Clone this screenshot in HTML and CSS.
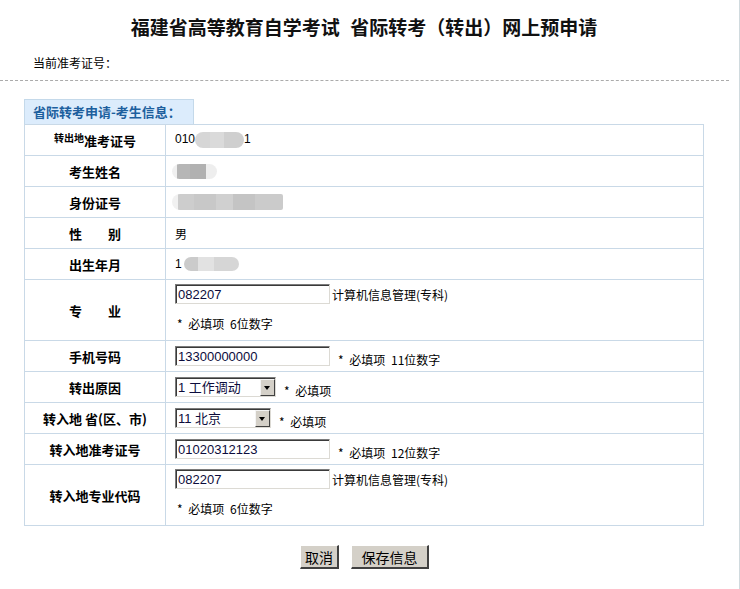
FILE: index.html
```html
<!DOCTYPE html>
<html lang="zh-CN">
<head>
<meta charset="utf-8">
<title>省际转考（转出）网上预申请</title>
<link rel="stylesheet" href="styles.css">
</head>
<body>
<div class="page">
  <div class="inner">
    <h1 class="title">福建省高等教育自学考试 省际转考（转出）网上预申请</h1>
    <div class="current">当前准考证号：</div>
    <div class="divider"></div>
    <div class="panel">
      <div class="tab">省际转考申请-考生信息：</div>
      <table class="form">
        <tr>
          <th class="label"><span class="sup">转出地</span>准考证号</th>
          <td class="value">010<span class="blob blob-no"></span>1</td>
        </tr>
        <tr>
          <th class="label">考生姓名</th>
          <td class="value"><span class="blob blob-name"></span></td>
        </tr>
        <tr>
          <th class="label">身份证号</th>
          <td class="value"><span class="blob blob-id"></span></td>
        </tr>
        <tr>
          <th class="label">性　　别</th>
          <td class="value">男</td>
        </tr>
        <tr>
          <th class="label">出生年月</th>
          <td class="value">1<span class="blob blob-birth"></span></td>
        </tr>
        <tr>
          <th class="label tall">专　　业</th>
          <td class="value tall">
            <div class="line"><input class="field" type="text" value="082207"><span class="after">计算机信息管理(专科)</span></div>
            <div class="note">* 必填项 6位数字</div>
          </td>
        </tr>
        <tr>
          <th class="label">手机号码</th>
          <td class="value"><div class="line"><input class="field" type="text" value="13300000000"><span class="hint">* 必填项 11位数字</span></div></td>
        </tr>
        <tr>
          <th class="label">转出原因</th>
          <td class="value"><div class="line"><span class="select sel-reason"><select><option>1 工作调动</option></select><span class="arrow"></span></span><span class="hint">* 必填项</span></div></td>
        </tr>
        <tr>
          <th class="label">转入地 省(区、市)</th>
          <td class="value"><div class="line"><span class="select sel-prov"><select><option>11 北京</option></select><span class="arrow"></span></span><span class="hint">* 必填项</span></div></td>
        </tr>
        <tr>
          <th class="label">转入地准考证号</th>
          <td class="value"><div class="line"><input class="field" type="text" value="01020312123"><span class="hint">* 必填项 12位数字</span></div></td>
        </tr>
        <tr>
          <th class="label tall">转入地专业代码</th>
          <td class="value tall">
            <div class="line"><input class="field" type="text" value="082207"><span class="after">计算机信息管理(专科)</span></div>
            <div class="note">* 必填项 6位数字</div>
          </td>
        </tr>
      </table>
      <div class="actions">
        <button class="btn btn-cancel" type="button">取消</button>
        <button class="btn btn-save" type="button">保存信息</button>
      </div>
    </div>
  </div>
</div>
</body>
</html>
```
FILE: styles.css
```css
html, body {
  margin: 0;
  padding: 0;
  background: #ffffff;
}

body {
  font-family: "Liberation Sans", "Noto Sans CJK SC", sans-serif;
  font-size: 12px;
  color: #000000;
}

.page {
  width: 740px;
  min-height: 589px;
  border-right: 1px solid #d0dade;
  box-sizing: border-box;
}

.inner {
  width: 728px;
}

.title {
  margin: 0;
  padding-top: 14px;
  text-align: center;
  font-family: "Noto Sans CJK SC", sans-serif;
  font-size: 19px;
  line-height: 26px;
  font-weight: bold;
  word-spacing: 6px;
  color: #111111;
}

.current {
  margin-top: 13px;
  padding-left: 33px;
  line-height: 20px;
  font-family: "Noto Sans CJK SC", sans-serif;
  font-size: 12px;
}

.divider {
  margin-top: 7px;
  width: 729px;
  border-top: 1px dashed #ababab;
}

.panel {
  width: 680px;
  margin: 18px auto 0;
}

.tab {
  width: 170px;
  height: 25px;
  box-sizing: border-box;
  border: 1px solid #c4d9ea;
  border-bottom: 0;
  background: #dcecfc;
  color: #1d5f9e;
  font-family: "Noto Sans CJK SC", sans-serif;
  font-weight: bold;
  font-size: 13px;
  line-height: 24px;
  padding-left: 8px;
}

.form {
  width: 680px;
  border-collapse: collapse;
}

.form th,
.form td {
  border: 1px solid #c9d9e7;
  height: 30px;
  padding: 0;
}

.label {
  width: 140px;
  text-align: center;
  font-family: "Noto Sans CJK SC", sans-serif;
  font-size: 13px;
  font-weight: bold;
  white-space: nowrap;
}

.sup {
  font-size: 10px;
  vertical-align: 4px;
}

.value {
  text-align: left;
  padding: 0 9px !important;
  font-family: "Liberation Sans", "Noto Sans CJK SC", sans-serif;
  font-size: 12px;
}

.value.tall {
  height: 51px;
  padding: 4px 9px 5px !important;
  vertical-align: top;
}

.blob {
  display: inline-block;
  vertical-align: middle;
  border-radius: 8px;
  filter: blur(0.6px);
}

.blob-no {
  width: 49px;
  height: 16px;
  background: linear-gradient(90deg, #d6d6d6 0 30%, #dadada 30% 60%, #cfcfcf 60% 100%);
}

.blob-name {
  width: 45px;
  height: 15px;
  margin-left: -3px;
  background: linear-gradient(90deg, #f0f0f0 0 12%, #b6b6b6 12% 40%, #b1b1b1 40% 75%, #eeeeee 75% 100%);
}

.blob-id {
  width: 111px;
  height: 16px;
  margin-left: -3px;
  background: linear-gradient(90deg, #f1f1f1 0 5%, #cdcdcd 5% 20%, #c8c8c8 20% 40%, #d0d0d0 40% 55%, #c4c4c4 55% 75%, #cbcbcb 75% 100%);
  border-radius: 8px 2px 2px 8px;
}

.blob-birth {
  width: 55px;
  height: 14px;
  margin-left: 2px;
  background: linear-gradient(90deg, #cbcbcb 0 25%, #e2e2e2 25% 55%, #d6d6d6 55% 100%);
}

.line {
  display: flex;
  align-items: flex-end;
}

.field {
  width: 155px;
  height: 20px;
  box-sizing: border-box;
  margin: 0;
  padding: 0 2px;
  border-style: solid;
  border-width: 1px;
  border-color: #7b7b7b #dcdad4 #dcdad4 #7b7b7b;
  box-shadow: inset 1px 1px 0 #3a3a3a;
  font-family: "Liberation Sans", "Noto Sans CJK SC", sans-serif;
  font-size: 13px;
  color: #0c0c3c;
  background: #ffffff;
  outline: none;
}

.after {
  margin-left: 2px;
  line-height: 14px;
  padding-bottom: 2px;
  font-family: "Noto Sans CJK SC", sans-serif;
  font-size: 12px;
}

.hint {
  margin-left: 8px;
  line-height: 14px;
  margin-bottom: -1px;
  word-spacing: 3px;
  font-family: "Noto Sans CJK SC", sans-serif;
  font-size: 12px;
}

.note {
  margin-top: 10px;
  padding-left: 2px;
  line-height: 20px;
  word-spacing: 3px;
  font-family: "Noto Sans CJK SC", sans-serif;
  font-size: 12px;
}

.select {
  position: relative;
  display: inline-block;
  height: 20px;
}

.select select {
  -webkit-appearance: none;
  appearance: none;
  height: 20px;
  box-sizing: border-box;
  margin: 0;
  padding: 0 0 0 2px;
  border-style: solid;
  border-width: 1px;
  border-color: #7b7b7b #dcdad4 #dcdad4 #7b7b7b;
  box-shadow: inset 1px 1px 0 #3a3a3a;
  background: #ffffff;
  font-family: "Liberation Sans", "Noto Sans CJK SC", sans-serif;
  font-size: 13px;
  color: #0c0c3c;
  border-radius: 0;
  outline: none;
}

.sel-reason select {
  width: 101px;
}

.sel-prov select {
  width: 96px;
}

.arrow {
  position: absolute;
  right: 1px;
  top: 2px;
  width: 15px;
  height: 17px;
  box-sizing: border-box;
  background: #d4d0c8;
  border-style: solid;
  border-width: 1px;
  border-color: #f4f4f4 #404040 #404040 #f4f4f4;
  pointer-events: none;
}

.arrow::after {
  content: "";
  position: absolute;
  left: 3px;
  top: 6px;
  border-left: 3.5px solid transparent;
  border-right: 3.5px solid transparent;
  border-top: 4px solid #000000;
}

.actions {
  display: flex;
  justify-content: center;
  gap: 12px;
  margin-top: 19px;
  padding-left: 1px;
}

.btn {
  height: 24px;
  box-sizing: border-box;
  padding: 0;
  margin: 0;
  background: #d4d0c8;
  border-style: solid;
  border-width: 1px 2px 2px 1px;
  border-color: #ffffff #404040 #404040 #ffffff;
  font-family: "Noto Sans CJK SC", sans-serif;
  font-size: 14px;
  line-height: 20px;
  color: #000000;
}

.btn-cancel {
  width: 39px;
}

.btn-save {
  width: 78px;
}
```
